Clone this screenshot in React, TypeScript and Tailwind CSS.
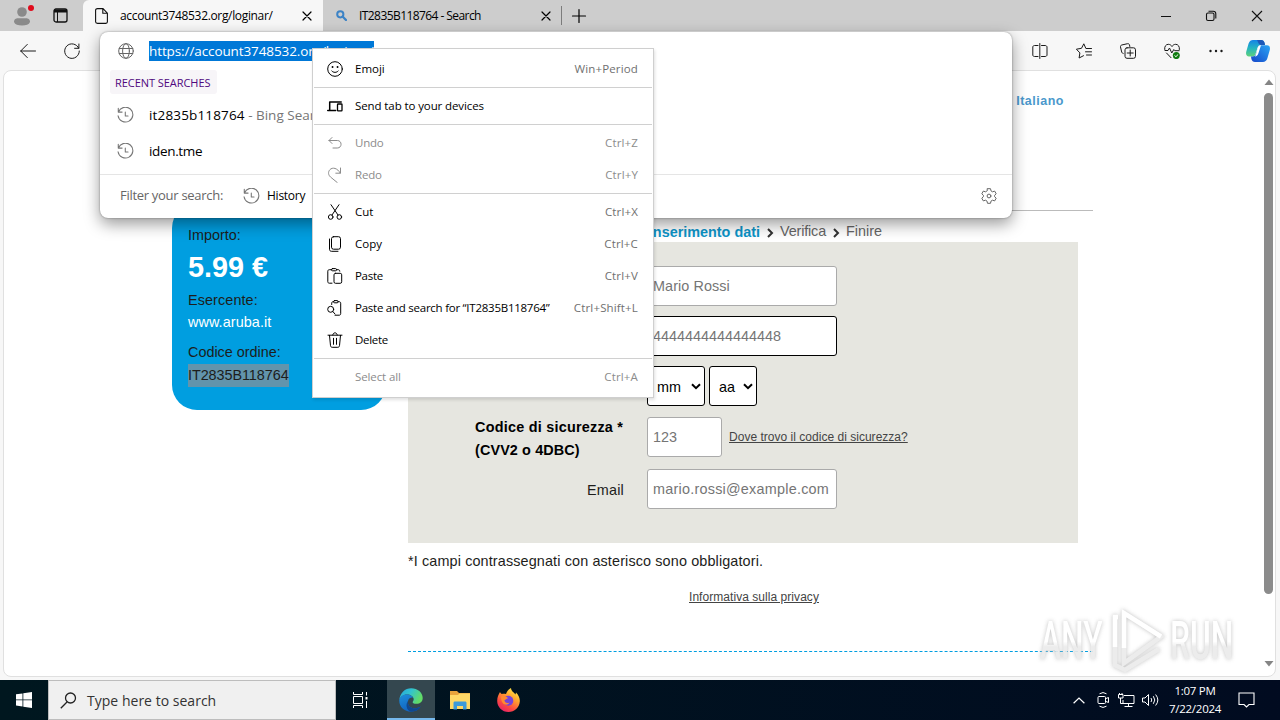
import type { ReactNode } from "react";

type IconProps = { children: ReactNode; size?: number; className?: string };

const Icon = ({ children, size = 16, className = "" }: IconProps) => (
  <svg
    width={size}
    height={size}
    viewBox="0 0 16 16"
    fill="none"
    stroke="currentColor"
    strokeWidth="1"
    strokeLinecap="round"
    strokeLinejoin="round"
    className={`shrink-0 ${className}`}
  >
    {children}
  </svg>
);

const CloseIcon = ({ size = 16 }: { size?: number }) => (
  <Icon size={size}>
    <path d="M4 4l8 8M12 4l-8 8" strokeWidth="1.2" />
  </Icon>
);

const HistoryIcon = () => (
  <Icon size={17} className="text-[#767676]">
    <path d="M1.200 1.200v3.600h3.600M1.400 4.600A7 7 0 1 1 1 8.200M7.800 4.800v3.600h2.600" />
  </Icon>
);

const TabStrip = () => (
  <div className="flex h-[31px] shrink-0 bg-[#cdcdcd] text-[12px] text-black">
    <div className="flex w-[83px] items-center pl-[13px]">
      <div className="relative h-[18px] w-[18px]">
        <svg width="18" height="20" viewBox="0 0 18 20" fill="#8a8a8a">
          <circle cx="9" cy="5" r="4.800" />
          <path d="M1 15c0-3 2-3.800 4-3.800h8c2 0 4 .8 4 3.800-1 2.600-4 3.500-8 3.500S2 17.600 1 15z" />
        </svg>
        <span className="absolute -top-[2px] left-[15px] h-[6px] w-[6px] rounded-full bg-[#e00b1c]" />
      </div>
      <svg width="15" height="15" viewBox="0 0 15 15" fill="none" stroke="#111" className="ml-[22px]">
        <rect x="1" y="1" width="13" height="13" rx="2" strokeWidth="1.300" />
        <path d="M1 3h13" strokeWidth="3" />
        <path d="M4.500 3v11" />
      </svg>
    </div>
    <div className="flex w-[240px] items-center rounded-tl-[6px] bg-[#f7f7f7] pl-3">
      <svg width="13" height="16" viewBox="0 0 13 16" fill="none" stroke="#111" strokeWidth="1.100">
        <path d="M2.500.6H8l4.400 4.600v8.600c0 1-.6 1.600-1.500 1.600H2.500c-1 0-1.900-.7-1.900-1.600V2.200c0-1 .9-1.600 1.900-1.600zM7.800.8v4.500h4.500" />
      </svg>
      <span className="ml-3 w-[154px] whitespace-nowrap tracking-[-0.340px]">account3748532.org/loginar/</span>
      <span className="ml-[25px]">
        <CloseIcon />
      </span>
    </div>
    <div className="flex w-[238px] items-center pl-[13px]">
      <svg width="11" height="11" viewBox="0 0 11 11" fill="none" stroke="#3c83c6">
        <circle cx="4.300" cy="4.300" r="3.100" strokeWidth="2" />
        <path d="M6.800 6.800l3.200 3.200" strokeWidth="2.300" strokeLinecap="round" />
      </svg>
      <span className="ml-3 w-[122px] whitespace-nowrap tracking-[-0.570px]">IT2835B118764 - Search</span>
      <span className="ml-[57px]">
        <CloseIcon />
      </span>
    </div>
    <div className="my-[6px] w-px bg-[#7c7c7c]" />
    <div className="flex items-center pl-[9px]">
      <Icon>
        <path d="M8 1.500v13M1.500 8h13" strokeWidth="1.200" />
      </Icon>
    </div>
    <div className="ml-auto flex items-center gap-[34px] pr-[17px]">
      <svg width="10" height="12" viewBox="0 0 10 12" stroke="#111">
        <path d="M0 6.500h10" />
      </svg>
      <svg width="12" height="12" viewBox="0 0 12 12" fill="none" stroke="#111" strokeWidth="1.100">
        <rect x="1.500" y="3" width="7.500" height="7.500" rx="1.500" />
        <path d="M3.500 1.200h4.700c1.700 0 2.600.9 2.600 2.600v4.700" />
      </svg>
      <svg width="12" height="12" viewBox="0 0 12 12" stroke="#111" strokeWidth="1.100">
        <path d="M1 1l10 10M11 1L1 11" />
      </svg>
    </div>
  </div>
);

const Toolbar = () => (
  <div className="flex h-[39px] shrink-0 items-center bg-[#f7f7f7] pl-5 text-[#1a1a1a]">
    <Icon>
      <path d="M15.500 8H.7M7.300 1.400L.7 8l6.600 6.600" />
    </Icon>
    <Icon className="ml-7">
      <path d="M14.700 5.200A7.300 7.300 0 1 0 15.300 8M14.900 1v4.300h-4.300" />
    </Icon>
    <div className="ml-auto flex items-center gap-7 pr-[10px]">
      <Icon>
        <path d="M6 2.500H2.500C1.500 2.500.8 3.200.8 4v8c0 .9.700 1.500 1.700 1.500H6M9.500 2.500H13c1.100 0 2 .6 2 1.500v8c0 .9-.9 1.500-2 1.500H9.500M7.800.5v15" />
      </Icon>
      <Icon>
        <path d="M10.500 5.500H9.900L7.800.8 5.500 5.300.4 6.200l3.500 3.700-.8 5.100 4.400-2.300M10.500 5.500h5M9.500 8.800h6M10.500 12h5" />
      </Icon>
      <Icon>
        <path d="M3.200 10.500c-.8-.2-1.300-.7-1.500-1.500L.5 4c-.2-1 .3-1.700 1.200-2l5.800-1.300c1-.2 1.700.3 2 1.200l.3 1.600" />
        <rect x="5" y="4.800" width="10.500" height="10.500" rx="2" />
        <path d="M10.200 7v6M7.200 10h6" />
      </Icon>
      <Icon>
        <path d="M.7 6.500C.2 3.500 2 1.300 4.300 1.300 6 1.300 7.300 2.300 8 3.500c.7-1.200 2-2.200 3.700-2.200 2.300 0 4.100 2.200 3.700 5.200M1 7.500h3L5.500 5l2.300 5 2-3.500 1 1.200h4.400M2.500 10L7 14.700" />
        <circle cx="12.300" cy="12.600" r="3.500" fill="#107c10" stroke="none" />
        <path d="M10.800 12.700l1.100 1 2-2" stroke="#fff" />
      </Icon>
      <Icon>
        <g fill="currentColor" stroke="none">
          <circle cx="2.500" cy="8" r="1.200" />
          <circle cx="8" cy="8" r="1.200" />
          <circle cx="13.500" cy="8" r="1.200" />
        </g>
      </Icon>
      <svg width="24" height="22" viewBox="0 0 24 22" className="-ml-[6px]">
        <defs>
          <linearGradient id="copilotLeft" x1="0" y1="0" x2="0" y2="1">
            <stop offset="0" stopColor="#1483e6" />
            <stop offset="0.500" stopColor="#25b5c0" />
            <stop offset="1" stopColor="#5fd27a" />
          </linearGradient>
          <linearGradient id="copilotRight" x1="0" y1="1" x2="1" y2="0">
            <stop offset="0" stopColor="#1546c9" />
            <stop offset="1" stopColor="#2aa5f5" />
          </linearGradient>
        </defs>
        <path d="M7 0h8c2 0 3 1 3.600 3L19 5h-4c-2 0-3 1-3.500 3l-2 6c-.7 2-1.500 2.500-3.500 2.500H3c-2.500 0-3.500-2-2.700-5L2.600 3.500C3.500 1 5 0 7 0z" fill="url(#copilotLeft)" />
        <path d="M11 0h4c2 0 3 1 3.600 3L19 5h-4c-1.500 0-2.300-1-2.800-2.500z" fill="#1d58b8" />
        <path d="M17 22H9c-2 0-3-1-3.600-3L5 16.500h1.500c2 0 3-1 3.500-3l2-5.500c.7-2 1.500-2.700 3.500-2.700H21c2.500 0 3.500 2 2.700 5l-2.300 8C20.500 21 19 22 17 22z" fill="url(#copilotRight)" />
        <path d="M11.500 8.500c.7-2.200 1.700-3.200 3.500-3.200l-2.500 7.700c-.7 2-1.700 3.500-3.700 3.500 1-.8 1.200-2 1.500-3.500z" fill="#fff" />
      </svg>
    </div>
  </div>
);

const OrderCard = () => (
  <div className="mt-[132px] flex h-[207px] w-[214px] shrink-0 flex-col rounded-[25px] bg-[#009ee0] pt-[21px] pl-4 text-[14.400px] text-[#1d1d1b]">
    <div className="h-[22px] leading-[22px]">Importo:</div>
    <div className="h-[43px] text-[28.800px] leading-[43px] font-bold text-white">5.99 €</div>
    <div className="h-[22px] leading-[22px] tracking-[0.100px]">Esercente:</div>
    <div className="h-[22px] leading-[22px] tracking-[0.080px] text-white">www.aruba.it</div>
    <div className="mt-2 h-[22px] leading-[22px]">Codice ordine:</div>
    <div className="mt-[1px] h-[23px] w-[101px] bg-[#6294ac] leading-[22px] tracking-[-0.060px] whitespace-nowrap">IT2835B118764</div>
  </div>
);

type FieldProps = { value: string; active?: boolean; className?: string };

const Field = ({ value, active, className = "w-[190px]" }: FieldProps) => (
  <div
    className={`flex h-10 shrink-0 items-center rounded-[3px] border bg-white pt-[2px] pl-[5px] text-[#757575] ${
      active ? "border-black" : "border-[#aaa]"
    } ${className}`}
  >
    {value}
  </div>
);

const DateSelect = ({ value, className }: { value: string; className: string }) => (
  <div className={`flex h-10 items-center justify-between rounded-[3px] border border-black bg-white pr-[3px] pl-[9px] text-black ${className}`}>
    <span className="pt-[3px]">{value}</span>
    <svg width="10" height="7" viewBox="0 0 10 7" fill="none" stroke="#000" strokeWidth="2">
      <path d="M1 1.200l4 4 4-4" />
    </svg>
  </div>
);

const Chevron = () => (
  <svg width="7" height="10" viewBox="0 0 7 10" fill="none" stroke="#333" strokeWidth="2" className="mt-[3px]">
    <path d="M1 1l4 4-4 4" />
  </svg>
);

const PaymentForm = () => (
  <div className="h-[301px] w-[670px] bg-[#e6e6e0] pt-6 text-[14.400px] text-[#1d1d1b]">
    <div className="flex h-[50px] pl-[239px]">
      <Field value="Mario Rossi" className="w-[190px] tracking-[0.080px]" />
    </div>
    <div className="flex h-[50px] pl-[239px]">
      <Field value="4444444444444448" active />
    </div>
    <div className="flex h-[51px] gap-1 pl-[239px]">
      <DateSelect value="mm" className="w-[58px]" />
      <DateSelect value="aa" className="w-[48px]" />
    </div>
    <div className="flex h-[52px]">
      <div className="-mt-px w-[239px] shrink-0 pl-[67px] leading-[23px] font-bold whitespace-nowrap text-black">
        <div className="tracking-[0.240px]">Codice di sicurezza *</div>
        <div className="tracking-[0.120px]">(CVV2 o 4DBC)</div>
      </div>
      <Field value="123" className="w-[75px]" />
      <span className="mt-[11px] ml-[7px] text-[12px] leading-[18px] tracking-[0.020px] whitespace-nowrap text-[#444] underline">
        Dove trovo il codice di sicurezza?
      </span>
    </div>
    <div className="flex h-10 items-center">
      <span className="w-[216px] pt-[3px] text-right tracking-[0.200px]">Email</span>
      <Field value="mario.rossi@example.com" className="ml-[23px] w-[190px] tracking-[0.240px]" />
    </div>
  </div>
);

const Page = () => (
  <div className="mr-1 ml-[3px] flex h-[607px] shrink-0 rounded-[8px] border border-[#e0e0e0] bg-white font-['Liberation_Sans',Arial,sans-serif]">
    <div className="flex min-w-0 flex-1 pl-[168px]">
      <OrderCard />
      <div className="ml-[22px] w-[685px] shrink-0">
        <div className="flex h-[140px] items-start justify-end border-b border-[#bbb] pt-[21px] pr-[29px] text-[12.500px] leading-[18px] font-bold tracking-[0.500px] text-[#4a98cc]">
          Italiano
        </div>
        <div className="flex h-[31px] items-center gap-[7px] pt-[10px] pl-[235px] text-[14.400px] text-[#666]">
          <span className="w-[117px] pt-[2px] text-right font-bold whitespace-nowrap text-[#0c94c8]">Inserimento dati</span>
          <Chevron />
          <span className="-ml-px w-[46px] tracking-[-0.150px]">Verifica</span>
          <Chevron />
          <span className="-ml-px">Finire</span>
        </div>
        <PaymentForm />
        <div className="mt-[7px] text-[14.400px] leading-[22px] tracking-[0.130px] whitespace-nowrap text-[#1d1d1b]">
          *I campi contrassegnati con asterisco sono obbligatori.
        </div>
        <div className="mt-4 pl-[281px] text-[12px] leading-[18px] tracking-[0.050px] text-[#444] underline">Informativa sulla privacy</div>
        <div className="mt-[45px] border-t border-dashed border-[#009ee0]" />
      </div>
    </div>
    <div className="flex w-[12px] flex-col items-center pt-[8px] pr-[1px] pb-[9px]">
      <svg width="10" height="6" viewBox="0 0 10 6" fill="#858585">
        <path d="M5 0.500L9.500 6h-9z" />
      </svg>
      <div className="mt-2 h-[501px] w-[9px] rounded-full bg-[#8b8b8b]" />
      <svg width="10" height="6" viewBox="0 0 10 6" fill="#858585" className="mt-auto">
        <path d="M5 5.500L9.500 0h-9z" />
      </svg>
    </div>
  </div>
);

const Suggestions = () => (
  <div className="absolute top-[32px] left-[100px] h-[186px] w-[912px] rounded-[8px] bg-white text-[13.500px] shadow-[0_0_2px_rgba(0,0,0,0.4),0_6px_16px_rgba(0,0,0,0.4)]">
    <div className="flex h-[38px] items-center pl-[18px] text-[#666]">
      <Icon>
        <circle cx="8" cy="8" r="7.300" />
        <ellipse cx="8" cy="8" rx="3.400" ry="7.300" />
        <path d="M1.300 5.500h13.400M1.300 10.500h13.400" />
      </Icon>
      <span className="ml-[15px] h-5 w-[225px] bg-[#0078d7] leading-[20px] tracking-[-0.100px] whitespace-nowrap text-white">
        https://account3748532.org/loginar/
      </span>
    </div>
    <div className="ml-[10px] flex h-6 w-[107px] items-center rounded-[3px] bg-[#f7f5f8] pt-[2px] pl-[5px] text-[11px] tracking-[-0.050px] whitespace-nowrap text-[#50087e]">
      RECENT SEARCHES
    </div>
    <div className="mt-[3px] flex h-9 items-center pl-[17px]">
      <HistoryIcon />
      <span className="ml-[15px] whitespace-nowrap text-black">
        <span className="tracking-[0.150px]">it2835b118764</span> <span className="text-[#767676]">- Bing Search</span>
      </span>
    </div>
    <div className="flex h-9 items-center pl-[17px] text-black">
      <HistoryIcon />
      <span className="ml-[15px] tracking-[-0.350px]">iden.tme</span>
    </div>
    <div className="mt-[5px] flex h-[44px] items-center border-t border-[#e5e5e5] pb-px pl-5 text-[13px]">
      <span className="w-[123px] tracking-[-0.290px] whitespace-nowrap text-[#666]">Filter your search:</span>
      <HistoryIcon />
      <span className="ml-[7px] text-[12px] tracking-[-0.250px] text-black">History</span>
      <Icon className="mr-[15px] ml-auto text-[#666]">
        <path d="M6.500.7h3l.5 2.200 1.500.9 2.200-.7 1.500 2.700L13.600 7.300v1.400l1.600 1.500-1.500 2.700-2.200-.7-1.500.9-.5 2.200h-3L6 13.100l-1.500-.9-2.200.7-1.500-2.700 1.600-1.500V7.300L.8 5.800l1.500-2.700 2.200.7L6 2.900z" />
        <circle cx="8" cy="8" r="1.900" />
      </Icon>
    </div>
  </div>
);

type MenuEntry = { label: string; keys?: string; icon?: ReactNode; disabled?: boolean; tracking?: string };

const menuGroups: MenuEntry[][] = [
  [
    {
      label: "Emoji",
      keys: "Win+Period",
      icon: (
        <>
          <circle cx="8" cy="8" r="7.300" />
          <path d="M4.800 10c1.500 1.900 4.900 1.900 6.400 0" />
          <path d="M5.500 6h.1M10.500 6h.1" strokeWidth="1.800" />
        </>
      ),
    },
  ],
  [
    {
      label: "Send tab to your devices",
      tracking: "tracking-[-0.100px]",
      icon: (
        <>
          <path d="M2.700 11.500V4h11.500M.7 12.500h8" strokeWidth="1.500" />
          <rect x="10.500" y="6" width="4.500" height="6.800" rx=".6" strokeWidth="1.300" />
        </>
      ),
    },
  ],
  [
    {
      label: "Undo",
      keys: "Ctrl+Z",
      disabled: true,
      tracking: "tracking-[-0.200px]",
      icon: <path d="M2 5.500h8.300c5 0 5 7.500 0 7.500H6M5 2.500l-3 3 3 3" />,
    },
    {
      label: "Redo",
      keys: "Ctrl+Y",
      disabled: true,
      tracking: "tracking-[-0.200px]",
      icon: <path d="M13.500 1v5.200H8.800M13.200 6C10.500 1 5.500-.2 2.800 2.800.8 5.200 1.300 8 3.500 10l6.700 5.500" />,
    },
  ],
  [
    {
      label: "Cut",
      keys: "Ctrl+X",
      icon: (
        <>
          <circle cx="3.700" cy="13" r="2.300" />
          <circle cx="12.300" cy="13" r="2.300" />
          <path d="M5 11L12 .7M11 11L4 .7" />
        </>
      ),
    },
    {
      label: "Copy",
      keys: "Ctrl+C",
      icon: (
        <>
          <rect x="4.500" y=".7" width="9" height="12.500" rx="2" />
          <path d="M2.500 3v10.300c0 1.300.8 2 2 2H11" />
        </>
      ),
    },
    {
      label: "Paste",
      keys: "Ctrl+V",
      tracking: "tracking-[-0.300px]",
      icon: (
        <>
          <path d="M4.500 1.700H2.300c-.9 0-1.500.6-1.500 1.500v10.500c0 .9.600 1.500 1.500 1.500H5M9.500 1.700h1.800c.9 0 1.500.6 1.500 1.500" />
          <rect x="4.500" y=".6" width="5" height="2.200" rx="1" />
          <rect x="7" y="5.300" width="7.700" height="10" rx="1.500" />
        </>
      ),
    },
    {
      label: "Paste and search for “IT2835B118764”",
      keys: "Ctrl+Shift+L",
      tracking: "tracking-[-0.250px]",
      icon: (
        <>
          <path d="M4.700 4.500V3.200c0-.9.500-1.500 1.400-1.500h.5M11 1.700h1.200c.9 0 1.500.6 1.500 1.500v10.500c0 .9-.6 1.500-1.500 1.500H8" />
          <rect x="6.600" y=".6" width="4.500" height="2.200" rx="1" />
          <circle cx="3.700" cy="9.300" r="3" />
          <path d="M5.800 11.500L8 14" />
        </>
      ),
    },
    {
      label: "Delete",
      tracking: "tracking-[-0.300px]",
      icon: (
        <path d="M1 3.200h14M5.800 3c0-3 4.400-3 4.400 0M2.500 3.400l1 10.300c.1 1 .8 1.600 1.700 1.600h5.600c.9 0 1.600-.6 1.700-1.600l1-10.300M6.500 6.300v6M9.500 6.300v6" />
      ),
    },
  ],
  [{ label: "Select all", keys: "Ctrl+A", disabled: true, tracking: "tracking-[-0.120px]" }],
];

const ContextMenu = () => (
  <div className="absolute top-[48px] left-[312px] w-[342px] border border-[#cfcfcf] bg-white py-1 text-[11.500px] text-black shadow-[1px_2px_3px_rgba(0,0,0,0.12)]">
    {menuGroups.map((group, index) => (
      <div key={index}>
        {index > 0 && <div className="mx-px my-[2px] h-px bg-[#d0d0d0]" />}
        {group.map((item) => (
          <div key={item.label} className={`flex h-8 items-center pr-[15px] pl-[14px] ${item.disabled ? "text-[#8c8c8c]" : ""}`}>
            <Icon>{item.icon}</Icon>
            <span className={`ml-3 whitespace-nowrap ${item.tracking ?? ""}`}>{item.label}</span>
            <span className={`ml-auto tracking-[0.150px] whitespace-nowrap ${item.disabled ? "text-[#8c8c8c]" : "text-[#707070]"}`}>
              {item.keys}
            </span>
          </div>
        ))}
      </div>
    ))}
  </div>
);

const WatermarkWord = ({ text }: { text: string }) => (
  <span className="w-[67px] shrink-0">
    <span className="inline-block origin-left scale-x-[0.600] bg-linear-to-b from-white from-50% to-[#ebebeb] to-60% bg-clip-text whitespace-nowrap text-transparent">
      {text}
    </span>
  </span>
);

const Watermark = () => (
  <div className="absolute top-[608px] left-[1040px] flex h-[66px] w-[194px] items-center font-['Roboto',sans-serif] text-[53px] leading-none font-medium opacity-90 [filter:drop-shadow(0_0_2px_#bbb)]">
    <WatermarkWord text="ANY" />
    <svg width="58" height="66" viewBox="0 0 58 66" fill="none" className="mr-[5px] shrink-0" strokeWidth="4.500">
      <path d="M17 55V5l37 23.500z" stroke="#ebebeb" />
      <path d="M11 9H8v48l10 5 34-21" stroke="#ebebeb" />
      <path d="M17 40V5l37 23.500M11 9H8v30" stroke="#fff" />
    </svg>
    <WatermarkWord text="RUN" />
  </div>
);

const Taskbar = () => (
  <div className="mt-auto flex h-10 shrink-0 bg-[#01131f] bg-linear-to-r from-[#00171f] to-[#010b20] text-white">
    <div className="flex w-12 items-center justify-center">
      <svg width="16" height="16" viewBox="0 0 16 16" fill="#fff">
        <path d="M0 2.300l6.500-.9v6.100H0zM7.300 1.300L16 0v7.500H7.300zM0 8.300h6.500v6.200L0 13.600zM7.300 8.300H16V16l-8.700-1.300z" />
      </svg>
    </div>
    <div className="flex w-[288px] items-center border border-[#bdbdbd] bg-[#f0f0f0] pl-[11px] text-[#333]">
      <svg width="17" height="17" viewBox="0 0 17 17" fill="none" stroke="#222" strokeWidth="1.300">
        <circle cx="10.500" cy="6" r="5" />
        <path d="M7 10L.8 16.200" />
      </svg>
      <span className="ml-[10px] text-[14px] tracking-[0.020px] whitespace-nowrap">Type here to search</span>
    </div>
    <div className="flex w-[51px] items-center justify-center pr-[3px]">
      <svg width="16" height="16" viewBox="0 0 16 16" fill="none" stroke="#fff">
        <path d="M1.500 0v2.500h9V0M1.500 16v-2.500h9V16M1.500 4.500h9v7h-9zM14.500 0v3.500M14.500 9v7" />
        <path d="M13.500 5h2v2.500h-2z" fill="#fff" stroke="none" />
      </svg>
    </div>
    <div className="flex w-12 items-center justify-center border-b-2 border-[#76b9ed] bg-[#34474f] pt-px">
      <svg width="24" height="24" viewBox="0 0 24 24">
        <defs>
          <linearGradient id="edgeTop" x1="0" y1="0" x2="1" y2="0.400">
            <stop offset="0" stopColor="#25a6dc" />
            <stop offset="0.500" stopColor="#32c3cf" />
            <stop offset="1" stopColor="#62dc67" />
          </linearGradient>
          <linearGradient id="edgeSide" x1="0" y1="0" x2="0.500" y2="1">
            <stop offset="0" stopColor="#1d8fdc" />
            <stop offset="1" stopColor="#1160bd" />
          </linearGradient>
        </defs>
        <path d="M.3 12C1 5 6 .3 12.200.3 18.600.3 23.700 4.700 23.700 10c0 3.600-2.700 5.800-6.300 5.800-2.800 0-4-.9-3.700-1.800.4-1 1-1.300 1-2.700C14.700 8.600 11.500 6.500 8 6.500 4 6.500 1.200 9 .3 12z" fill="url(#edgeTop)" />
        <path d="M.3 12C1 8.500 4.200 6.500 8 6.500c3 0 5.500 1.500 6.300 3.500-1-.8-4.500-.6-5.300 3-.8 4.500 3 8 8.500 7.200 1.500-.2 3-.9 4.200-1.600C19.600 22 16 23.800 12 23.800 5 23.800-.2 18.500.3 12z" fill="url(#edgeSide)" />
        <path d="M9 13c-.8 4.500 3 8 8.500 7.200 1.500-.2 3-.9 4.200-1.600C19.600 22 16 23.800 12 23.800 7 22 6.500 16 9 13z" fill="#10488f" />
      </svg>
    </div>
    <div className="flex w-12 items-center justify-center pl-[2px]">
      <svg width="22" height="19" viewBox="0 0 22 19">
        <path d="M1 0h7l2 2h11v4H1z" fill="#e8a33c" />
        <path d="M1 4h8l1.500-1.500H21V18H1z" fill="#ffd867" />
        <path d="M4.500 18.500V12c0-1 .5-1.500 1.500-1.500h10c1 0 1.500.5 1.500 1.500v6.500H14V15H8v3.500z" fill="#3d9adb" />
      </svg>
    </div>
    <div className="flex w-12 items-center justify-center pl-[3px]">
      <svg width="23" height="24" viewBox="0 0 23 24">
        <defs>
          <linearGradient id="fox" x1="0.800" y1="0" x2="0.200" y2="1">
            <stop offset="0" stopColor="#fff04a" />
            <stop offset="0.350" stopColor="#ffa52e" />
            <stop offset="0.700" stopColor="#fc4a41" />
            <stop offset="1" stopColor="#e61c6c" />
          </linearGradient>
        </defs>
        <path d="M3 4c.5 1 1 1.800 2 2 1.500-.4 3 0 4 0C10 3.500 12 1 14 0c0 3 3 4.500 4.500 6.500l.5-2c3 3 4 6 3.800 9C22.300 19.500 17.500 24 11.500 24 5 24 .2 19 .2 13 .2 9 1.500 6.500 3 4z" fill="url(#fox)" />
        <circle cx="11.300" cy="12.800" r="5" fill="#7543d9" />
        <path d="M4 8.500c3-1 5.500 0 7 1.700-2 .3-2 1.600-3.500 1.800 0 2.500 2.500 3.800 5 2.500-2 4-8.500 3-8.500-6z" fill="#ff8a30" />
      </svg>
    </div>
    <div className="ml-auto flex items-center">
      <svg width="12" height="7" viewBox="0 0 12 7" fill="none" stroke="#fff" strokeWidth="1.200">
        <path d="M.6 6.300L6 1l5.400 5.300" />
      </svg>
      <svg width="12" height="16" viewBox="0 0 12 16" fill="none" stroke="#fff" className="ml-[12px]">
        <path d="M2.500 1.800Q6-.7 9.500 1.800M2.500 14.200q3.500 2.500 7 0M9 6.500l2.500-1v5L9 9.500" />
        <rect x="1" y="4.500" width="7.500" height="7" rx="1" />
      </svg>
      <svg width="17" height="15" viewBox="0 0 17 15" fill="none" stroke="#fff" className="ml-[9px]">
        <path d="M6 2.500h10v8H5V7M10.500 10.500v3M6.500 13.500h8M2.500 5v5.500H5" />
        <path d="M.5 1.500h4.500V5H.5zM1.500 1V0M4 1V0" />
      </svg>
      <svg width="17" height="14" viewBox="0 0 17 14" fill="none" stroke="#fff" className="ml-[7px]">
        <path d="M.5 5H3l3.500-3.500v11L3 9H.5zM9 5q1.500 2 0 4M11.300 3.200q3 3.800 0 7.600M13.600 1.500q4.500 5.500 0 11" />
      </svg>
      <div className="ml-[9px] w-[54px] text-center text-[11.500px] leading-[18px] tracking-[-0.250px] whitespace-nowrap">
        <div>1:07 PM</div>
        <div>7/22/2024</div>
      </div>
      <svg width="17" height="16" viewBox="0 0 17 16" fill="none" stroke="#fff" strokeWidth="1.100" className="mr-[25px] ml-[16px]">
        <path d="M1 1h15v11.500h-5L8.500 15 6 12.500H1z" />
      </svg>
    </div>
  </div>
);

const App = () => {
  return (
    <div className="relative flex h-[720px] w-[1280px] flex-col overflow-hidden bg-[#f7f7f7] font-['Open_Sans','Noto_Sans',sans-serif]">
      <TabStrip />
      <Toolbar />
      <Page />
      <Taskbar />
      <Suggestions />
      <ContextMenu />
      <Watermark />
    </div>
  );
};

export default App;
